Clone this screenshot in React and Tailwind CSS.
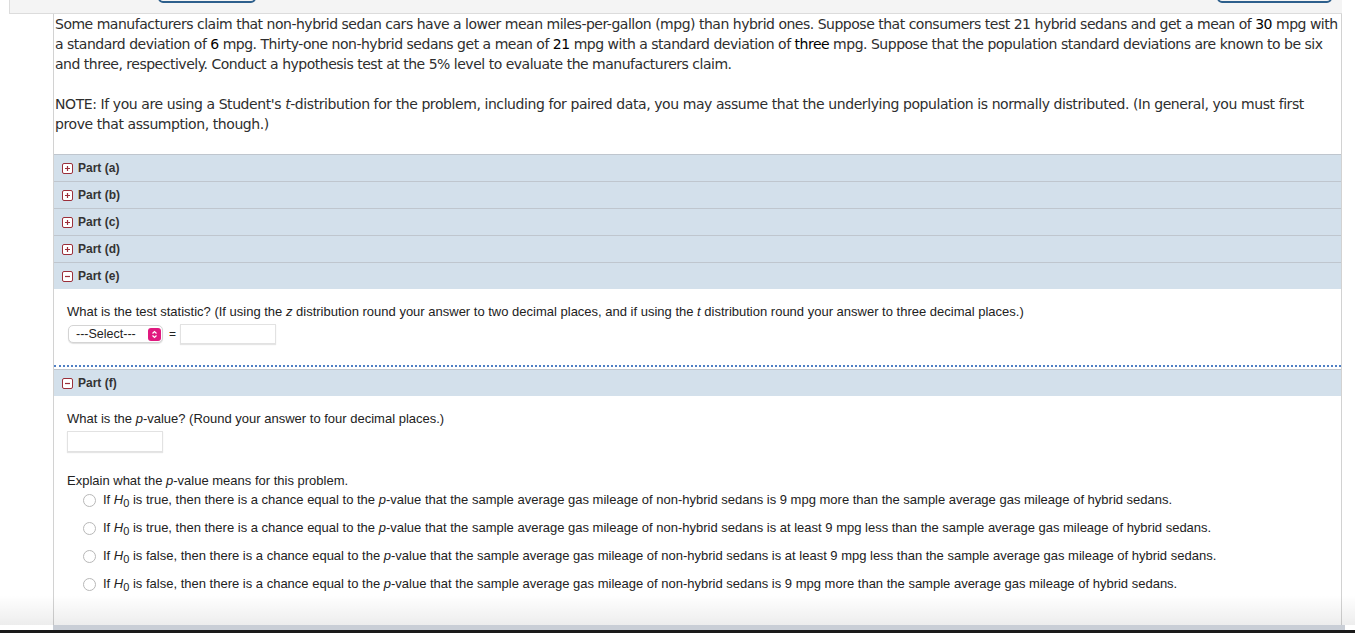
import React from "react";

const Plus = () => (
  <span className="inline-flex items-center justify-center w-[11px] h-[11px] border border-[#9b2f3a] rounded-[2px] bg-white mr-[5px] shrink-0">
    <svg width="7" height="7" viewBox="0 0 7 7"><path d="M3.5 1v5M1 3.5h5" stroke="#9b2f3a" strokeWidth="1.2" /></svg>
  </span>
);
const Minus = () => (
  <span className="inline-flex items-center justify-center w-[11px] h-[11px] border border-[#9b2f3a] rounded-[2px] bg-white mr-[5px] shrink-0">
    <svg width="7" height="7" viewBox="0 0 7 7"><path d="M1 3.5h5" stroke="#9b2f3a" strokeWidth="1.2" /></svg>
  </span>
);

const PartHeader = ({ label, open }) => (
  <div className="h-[27px] bg-[#d3e0eb] border-t border-[#bfc6ce] flex items-center pl-[8px] text-[12px] font-bold text-[#333]">
    {open ? <Minus /> : <Plus />}
    <span>Part ({label})</span>
  </div>
);

const H0 = () => (
  <>
    <i>H</i>
    <span className="text-[11px] relative top-[3px]">0</span>
  </>
);

const Radio = ({ children }) => (
  <div className="flex items-center h-[28px]">
    <span className="w-[13px] h-[13px] rounded-full border border-[#b8b8b8] bg-white ml-[16px] mr-[7px] shrink-0" />
    <span className="whitespace-nowrap">{children}</span>
  </div>
);

export default function App() {
  const arial = { fontFamily: '"Liberation Sans", Arial, sans-serif' };
  return (
    <div className="w-[1355px] h-[633px] overflow-hidden bg-white relative">
      {/* top bar */}
      <div className="relative ml-[9px] w-[1333px] h-[14px] bg-[#f4f4f4] border-b border-l border-[#dcdcdc]">
        <div className="absolute left-[148px] top-[-6px] w-[98px] h-[9px] border-2 border-[#2d5f8c] rounded-b-[5px] bg-[#f4f4f4]" />
        <div className="absolute left-[1207px] top-[-6px] w-[115px] h-[9px] border-2 border-[#2d5f8c] rounded-b-[5px] bg-[#f4f4f4]" />
      </div>

      <div className="ml-[53px] w-[1289px] border-l border-r border-[#d2d2d2] h-[620px] relative">
        <div
          className="pl-[1px] pr-[2px] text-[14px] leading-[20px] text-[#2e2e2e] whitespace-nowrap"
          style={{ fontFamily: '"DejaVu Sans", Verdana, sans-serif' }}
        >
          <p style={{ letterSpacing: "-0.49px" }}>
            Some manufacturers claim that non-hybrid sedan cars have a lower mean miles-per-gallon (mpg) than hybrid ones. Suppose that consumers test 21 hybrid sedans and get a mean of <span className="text-black">30</span> mpg with
            <br />
            a standard deviation of <span className="text-black">6</span> mpg. Thirty-one non-hybrid sedans get a mean of <span className="text-black">21</span> mpg with a standard deviation of <span className="text-black">three</span> mpg. Suppose that the population standard deviations are known to be six
            <br />
            and three, respectively. Conduct a hypothesis test at the 5% level to evaluate the manufacturers claim.
          </p>
          <p className="mt-[20px]" style={{ letterSpacing: "-0.42px" }}>
            NOTE: If you are using a Student's <i>t</i>-distribution for the problem, including for paired data, you may assume that the underlying population is normally distributed. (In general, you must first
            <br />
            prove that assumption, though.)
          </p>
        </div>

        <div className="mt-[20px]" style={arial}>
          <PartHeader label="a" />
          <PartHeader label="b" />
          <PartHeader label="c" />
          <PartHeader label="d" />
          <PartHeader label="e" open />

          <div className="pl-[13px] pt-[14px] text-[13px] leading-[18px] text-[#222] h-[76px]">
            <div>
              What is the test statistic? (If using the <i>z</i> distribution round your answer to two decimal places, and if using the <i>t</i> distribution round your answer to three decimal places.)
            </div>
            <div className="flex items-center mt-[3px] h-[20px]">
              <div className="w-[95px] h-[18px] ml-[1px] rounded-[5px] border border-[#d4d4d4] bg-white shadow-[0_1px_1px_rgba(0,0,0,0.12)] flex items-center pl-[7px] pr-[1px] text-[12.5px] text-[#222]">
                <span>---Select---</span>
                <span className="ml-auto w-[13px] h-[13px] rounded-[3px] bg-[#e0197f] flex items-center justify-center">
                  <svg width="7" height="9" viewBox="0 0 7 9"><path d="M1.5 3.5L3.5 1.5L5.5 3.5M1.5 5.5L3.5 7.5L5.5 5.5" stroke="white" strokeWidth="1.2" fill="none" /></svg>
                </span>
              </div>
              <span className="ml-[6px] text-[12px]">=</span>
              <div className="ml-[4px] w-[96px] h-[20px] border border-[#e2e2e2] bg-white shadow-[0_1px_1px_rgba(0,0,0,0.1)]" />
            </div>
          </div>

          <div className="border-t-2 border-dotted border-[#4f7fc4]" />
          <div className="h-[2px]" />
          <PartHeader label="f" open />

          <div className="pl-[13px] pt-[14px] text-[13px] leading-[18px] text-[#222]">
            <div>
              What is the <i>p</i>-value? (Round your answer to four decimal places.)
            </div>
            <div className="mt-[3px] w-[96px] h-[21px] border border-[#e2e2e2] bg-white shadow-[0_1px_1px_rgba(0,0,0,0.1)]" />
            <div className="mt-[20px]">Explain what the <i>p</i>-value means for this problem.</div>
            <div className="-mt-[4px]">
              <Radio>If <H0 /> is true, then there is a chance equal to the <i>p</i>-value that the sample average gas mileage of non-hybrid sedans is 9 mpg more than the sample average gas mileage of hybrid sedans.</Radio>
              <Radio>If <H0 /> is true, then there is a chance equal to the <i>p</i>-value that the sample average gas mileage of non-hybrid sedans is at least 9 mpg less than the sample average gas mileage of hybrid sedans.</Radio>
              <Radio>If <H0 /> is false, then there is a chance equal to the <i>p</i>-value that the sample average gas mileage of non-hybrid sedans is at least 9 mpg less than the sample average gas mileage of hybrid sedans.</Radio>
              <Radio>If <H0 /> is false, then there is a chance equal to the <i>p</i>-value that the sample average gas mileage of non-hybrid sedans is 9 mpg more than the sample average gas mileage of hybrid sedans.</Radio>
            </div>
          </div>
        </div>
      </div>

      {/* bottom shading */}
      <div className="absolute left-0 right-0 top-[595px] h-[30px] bg-gradient-to-b from-transparent to-[rgba(0,0,0,0.07)] pointer-events-none" />
      <div className="absolute left-[53px] right-[10px] top-[625px] h-[5px] bg-[#c9ced6]" />
      <div className="absolute left-0 right-0 top-[630px] h-[3px] bg-[#1a1a1a]" />
    </div>
  );
}
